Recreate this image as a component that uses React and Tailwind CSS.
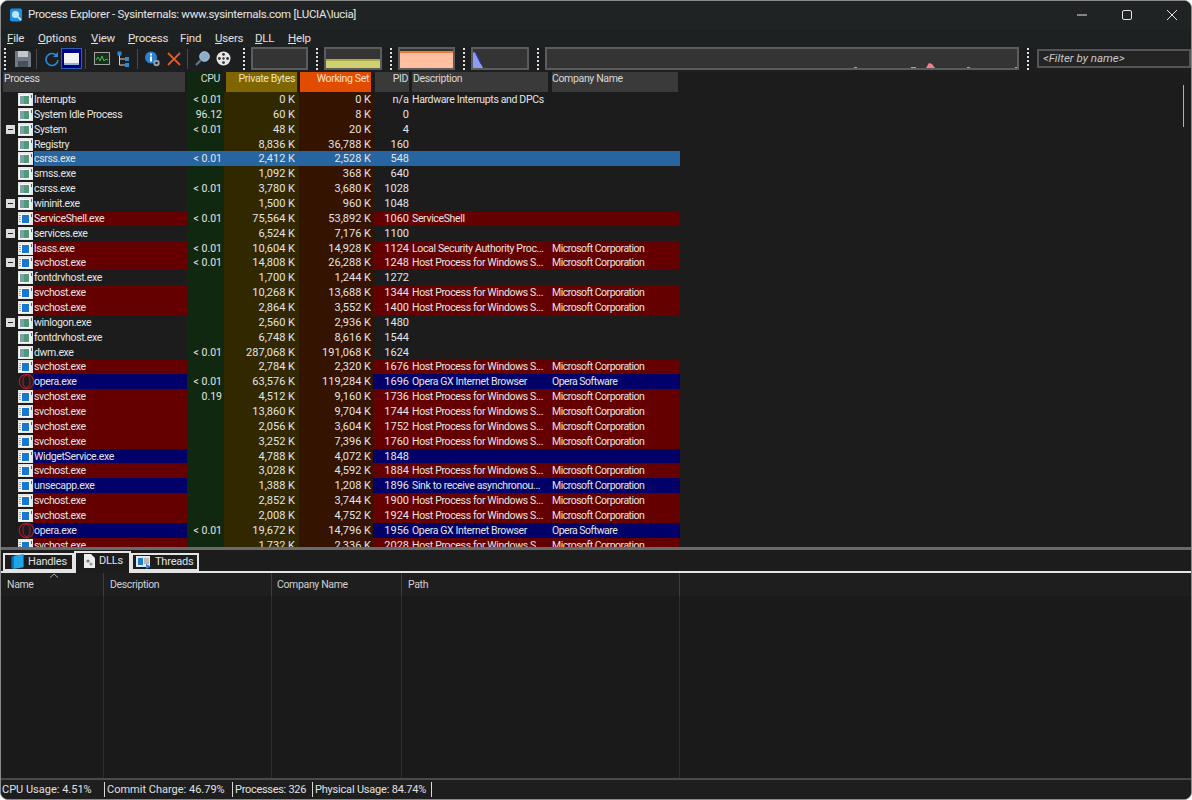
const ROWS = [
  ['Interrupts', 'sys', 0, '< 0.01', '0 K', '0 K', 'n/a', 'Hardware Interrupts and DPCs', '', ''],
  ['System Idle Process', 'sys', 0, '96.12', '60 K', '8 K', '0', '', '', ''],
  ['System', 'sys', 1, '< 0.01', '48 K', '20 K', '4', '', '', ''],
  ['Registry', 'sys', 0, '', '8,836 K', '36,788 K', '160', '', '', ''],
  ['csrss.exe', 'sys', 0, '< 0.01', '2,412 K', '2,528 K', '548', '', '', 'sel'],
  ['smss.exe', 'sys', 0, '', '1,092 K', '368 K', '640', '', '', ''],
  ['csrss.exe', 'sys', 0, '< 0.01', '3,780 K', '3,680 K', '1028', '', '', ''],
  ['wininit.exe', 'sys', 1, '', '1,500 K', '960 K', '1048', '', '', ''],
  ['ServiceShell.exe', 'svc', 0, '< 0.01', '75,564 K', '53,892 K', '1060', 'ServiceShell', '', 'red'],
  ['services.exe', 'sys', 1, '', '6,524 K', '7,176 K', '1100', '', '', ''],
  ['lsass.exe', 'svc', 0, '< 0.01', '10,604 K', '14,928 K', '1124', 'Local Security Authority Proc...', 'Microsoft Corporation', 'red'],
  ['svchost.exe', 'svc', 1, '< 0.01', '14,808 K', '26,288 K', '1248', 'Host Process for Windows S...', 'Microsoft Corporation', 'red'],
  ['fontdrvhost.exe', 'sys', 0, '', '1,700 K', '1,244 K', '1272', '', '', ''],
  ['svchost.exe', 'svc', 0, '', '10,268 K', '13,688 K', '1344', 'Host Process for Windows S...', 'Microsoft Corporation', 'red'],
  ['svchost.exe', 'svc', 0, '', '2,864 K', '3,552 K', '1400', 'Host Process for Windows S...', 'Microsoft Corporation', 'red'],
  ['winlogon.exe', 'sys', 1, '', '2,560 K', '2,936 K', '1480', '', '', ''],
  ['fontdrvhost.exe', 'sys', 0, '', '6,748 K', '8,616 K', '1544', '', '', ''],
  ['dwm.exe', 'sys', 0, '< 0.01', '287,068 K', '191,068 K', '1624', '', '', ''],
  ['svchost.exe', 'svc', 0, '', '2,784 K', '2,320 K', '1676', 'Host Process for Windows S...', 'Microsoft Corporation', 'red'],
  ['opera.exe', 'opera', 0, '< 0.01', '63,576 K', '119,284 K', '1696', 'Opera GX Internet Browser', 'Opera Software', 'navy'],
  ['svchost.exe', 'svc', 0, '0.19', '4,512 K', '9,160 K', '1736', 'Host Process for Windows S...', 'Microsoft Corporation', 'red'],
  ['svchost.exe', 'svc', 0, '', '13,860 K', '9,704 K', '1744', 'Host Process for Windows S...', 'Microsoft Corporation', 'red'],
  ['svchost.exe', 'svc', 0, '', '2,056 K', '3,604 K', '1752', 'Host Process for Windows S...', 'Microsoft Corporation', 'red'],
  ['svchost.exe', 'svc', 0, '', '3,252 K', '7,396 K', '1760', 'Host Process for Windows S...', 'Microsoft Corporation', 'red'],
  ['WidgetService.exe', 'svc', 0, '', '4,788 K', '4,072 K', '1848', '', '', 'navy'],
  ['svchost.exe', 'svc', 0, '', '3,028 K', '4,592 K', '1884', 'Host Process for Windows S...', 'Microsoft Corporation', 'red'],
  ['unsecapp.exe', 'svc', 0, '', '1,388 K', '1,208 K', '1896', 'Sink to receive asynchronou...', 'Microsoft Corporation', 'navy'],
  ['svchost.exe', 'svc', 0, '', '2,852 K', '3,744 K', '1900', 'Host Process for Windows S...', 'Microsoft Corporation', 'red'],
  ['svchost.exe', 'svc', 0, '', '2,008 K', '4,752 K', '1924', 'Host Process for Windows S...', 'Microsoft Corporation', 'red'],
  ['opera.exe', 'opera', 0, '< 0.01', '19,672 K', '14,796 K', '1956', 'Opera GX Internet Browser', 'Opera Software', 'navy'],
  ['svchost.exe', 'svc', 0, '', '1,732 K', '2,336 K', '2028', 'Host Process for Windows S...', 'Microsoft Corporation', 'red'],
]

const MENU = [
  ['File', 0, 'w-[31px]'],
  ['Options', 0, 'w-[53px]'],
  ['View', 0, 'w-[37px]'],
  ['Process', 0, 'w-[52px]'],
  ['Find', 1, 'w-[35px]'],
  ['Users', 0, 'w-[40px]'],
  ['DLL', 0, 'w-[33px]'],
  ['Help', 0, 'w-[30px]'],
]

// the reference text is narrow, so labels get pulled in a bit
const LABEL = 'text-[10.5px] tracking-[-0.35px]'

function ProcIcon({ kind }) {
  if (kind === 'opera') {
    return (
      <svg width="17" height="17" viewBox="0 0 17 17" className="-mr-[2px] shrink-0">
        <circle cx="8.5" cy="8.5" r="7.2" fill="none" stroke="#b01830" strokeWidth="1.2" />
        <ellipse cx="8.5" cy="8.5" rx="3.6" ry="6" fill="none" stroke="#b01830" strokeWidth="1.1" />
      </svg>
    )
  }
  return (
    <svg width="15" height="13" viewBox="0 0 15 13" className="shrink-0">
      <rect x="0" y="0" width="15" height="13" fill="#e6e6e6" />
      <rect x="1" y="2" width="11.5" height="10" fill="#fafafa" />
      {kind === 'svc' ? (
        <>
          <rect x="4" y="3" width="7" height="8" fill="#1878d0" />
          <path d="M2 3v8" stroke="#30506a" strokeDasharray="1 1" />
        </>
      ) : (
        <>
          <rect x="2" y="3" width="4" height="8" fill="#7f9fa8" />
          <rect x="6" y="3" width="5" height="8" fill="#4f9a78" />
        </>
      )}
      <rect x="13" y="2" width="1" height="3" fill="#5c5c5c" />
    </svg>
  )
}

function ProcessRow({ row }) {
  const [name, icon, tree, cpu, priv, ws, pid, desc, company, tone] = row
  const band = tone === 'sel' ? 'bg-[#2665a0]' : tone === 'red' ? 'bg-[#640000]' : tone === 'navy' ? 'bg-[#000068]' : ''
  return (
    <div className="flex h-[14.87px] w-[679px] items-center whitespace-nowrap text-[11px] text-[#e4e4e4]">
      <div className="flex h-full w-[33px] shrink-0 items-center">
        <div className="flex w-[16.5px] shrink-0 justify-end pr-[3px]">
          {tree ? (
            <div className="flex h-[9px] w-[9px] items-center justify-center bg-[#dcdcdc]">
              <div className="h-px w-[5px] bg-[#222]" />
            </div>
          ) : null}
        </div>
        <ProcIcon kind={icon} />
      </div>
      <div className={`flex h-full w-[153px] shrink-0 items-center ${LABEL} ${band}`}>{name}</div>
      <div className={`flex h-full w-[37px] shrink-0 items-center justify-end pr-[2px] text-[10.5px] ${tone === 'sel' ? band : 'bg-[#10280f]'}`}>{cpu}</div>
      <div className={`flex h-full w-[75px] shrink-0 items-center justify-end pr-[4px] ${tone === 'sel' ? band : 'bg-[#312800]'}`}>{priv}</div>
      <div className={`flex h-full w-[74px] shrink-0 items-center justify-end pr-[2px] ${tone === 'sel' ? band : 'bg-[#341300]'}`}>{ws}</div>
      <div className={`flex h-full w-[36px] shrink-0 items-center justify-end ${band}`}>{pid}</div>
      <div className={`flex h-full w-[140px] shrink-0 items-center overflow-hidden pl-[3px] ${LABEL} ${band}`}>{desc}</div>
      <div className={`flex h-full w-[131px] shrink-0 items-center pl-[3px] text-[10.5px] tracking-[-0.5px] ${band}`}>{company}</div>
    </div>
  )
}

function Grip() {
  return <div className="ml-[8px] mr-[6px] h-[22px] w-0 shrink-0 border-l-2 border-dotted border-[#e0e0e0]" />
}

function Sep() {
  return <div className="h-[20px] w-px shrink-0 bg-[#4a4a4a]" />
}

function Graph({ width, children }) {
  return (
    <div className="relative h-[23px] shrink-0 overflow-hidden border-2 border-[#5c5c5c] bg-[#343434]" style={{ width }}>
      {children}
    </div>
  )
}

function ToolIcons() {
  return (
    <div className="flex w-[223px] shrink-0 items-center">
      <svg width="16" height="16" viewBox="0 0 16 16" className="ml-[3px] shrink-0">
        <path d="M0 0h14l2 2v14H0z" fill="#6f7a84" />
        <rect x="3" y="0" width="10" height="6" fill="#c4c8cc" />
        <rect x="3" y="10" width="10" height="6" fill="#4a5056" />
      </svg>
      <div className="ml-[5px]"><Sep /></div>
      <svg width="14" height="16" viewBox="0 0 14 16" className="ml-[8px] shrink-0">
        <path d="M11.5 4.5A6 6 0 1 0 13 9" fill="none" stroke="#2a8ad8" strokeWidth="1.6" />
        <path d="M13 1v5H8z" fill="#2a8ad8" />
      </svg>
      <div className="ml-[2px] flex h-[21px] w-[21px] shrink-0 items-center justify-center border border-[#2a62b8] bg-[#000080]">
        <div className="h-[12px] w-[15px] border-b-2 border-[#8fb4e0] bg-[#f2f2f2]" />
      </div>
      <div className="ml-[3px]"><Sep /></div>
      <svg width="16" height="13" viewBox="0 0 16 13" className="ml-[8px] shrink-0">
        <rect x="0.5" y="0.5" width="15" height="12" fill="#1c2c20" stroke="#a0a4a0" />
        <path d="M2 8l2-3 2 4 2-5 2 5 2-2 2 1" fill="none" stroke="#40c048" strokeWidth="1" />
      </svg>
      <svg width="12" height="16" viewBox="0 0 12 16" className="ml-[7px] shrink-0">
        <path d="M2.5 3v11h6M2.5 8h6" fill="none" stroke="#d0d0d0" />
        <rect x="0.5" y="0.5" width="4" height="4" fill="#2a8ad8" />
        <rect x="8" y="6" width="4" height="4" fill="#2a8ad8" />
        <rect x="8" y="12" width="4" height="4" fill="#2a8ad8" />
      </svg>
      <div className="ml-[8px]"><Sep /></div>
      <svg width="15" height="16" viewBox="0 0 15 16" className="ml-[7px] shrink-0">
        <circle cx="6" cy="6.5" r="6" fill="#2a80d4" />
        <rect x="5" y="5.5" width="2" height="5" fill="#fff" />
        <rect x="5" y="2.5" width="2" height="2" fill="#fff" />
        <circle cx="11.5" cy="12" r="2.2" fill="none" stroke="#96a0a8" strokeWidth="2" />
      </svg>
      <svg width="14" height="14" viewBox="0 0 14 14" className="ml-[7px] shrink-0">
        <path d="M1 1l12 12M13 1L1 13" stroke="#e05a28" strokeWidth="1.8" />
      </svg>
      <div className="ml-[6px]"><Sep /></div>
      <svg width="15" height="15" viewBox="0 0 15 15" className="ml-[7px] shrink-0">
        <circle cx="9.5" cy="5.5" r="4.8" fill="#88aed0" stroke="#b8c4d0" />
        <path d="M6 9L1 14" stroke="#607488" strokeWidth="2.4" />
      </svg>
      <svg width="15" height="15" viewBox="0 0 15 15" className="ml-[6px] shrink-0">
        <circle cx="7.5" cy="7.5" r="7" fill="#e6e6e6" />
        <circle cx="7.5" cy="3.4" r="1.4" fill="#333" />
        <circle cx="7.5" cy="11.6" r="1.4" fill="#333" />
        <circle cx="3.4" cy="7.5" r="1.4" fill="#333" />
        <circle cx="11.6" cy="7.5" r="1.4" fill="#333" />
        <circle cx="7.5" cy="7.5" r="1.2" fill="#333" />
      </svg>
    </div>
  )
}

function Header() {
  return (
    <div className={`flex h-[20px] shrink-0 whitespace-nowrap leading-[14px] text-[#d8d8d8] ${LABEL}`}>
      <div className="ml-[2px] w-[182px] bg-[#3a3a3a] pl-[1px]">Process</div>
      <div className="ml-[2px] w-[35px] bg-[#10280f] pr-[2px] text-right">CPU</div>
      <div className="ml-[4px] w-[71px] bg-[#7f6600] pr-[2px] text-right text-[#f0e4b8]">Private Bytes</div>
      <div className="ml-[3px] w-[71px] bg-[#e24c00] pr-[2px] text-right text-[#ffe0cc]">Working Set</div>
      <div className="ml-[4px] w-[34px] bg-[#3a3a3a] pr-[1px] text-right">PID</div>
      <div className="ml-[3px] w-[136px] bg-[#3a3a3a] pl-[1px]">Description</div>
      <div className="ml-[4px] w-[126px] bg-[#3a3a3a]">Company Name</div>
    </div>
  )
}

function Tab({ label, active, icon, width }) {
  return (
    <div
      className={`flex items-center border-2 border-[#e4e4e4] ${active ? 'relative -mb-[2px] h-[22px] border-b-0 bg-[#1c1c1c] pb-[5px]' : 'h-[18px] pb-[1px]'}`}
      style={{ width }}
    >
      {icon}
      <span>{label}</span>
    </div>
  )
}

export default function App() {
  return (
    <div className="flex h-[800px] w-[1192px] flex-col overflow-hidden rounded-lg border border-[#8a8a8a] bg-[#1c1c1c] font-['Roboto',sans-serif] text-[11px] leading-[15px] text-[#e0e0e0]">
      {/* title bar */}
      <div className="flex h-[29px] shrink-0 items-center bg-[#1f2324] pb-[2px] pl-[8px] text-[11.5px] tracking-[-0.3px]">
        <svg width="14" height="14" viewBox="0 0 14 14">
          <rect x="1" y="0.5" width="12" height="13" rx="2" fill="#1d8fe0" />
          <circle cx="6.5" cy="6.5" r="3.6" fill="#bfe6fa" />
          <path d="M9 9l3 3" stroke="#e8f6ff" strokeWidth="1.6" />
        </svg>
        <span className="ml-[5px] text-[#e6e6e6]">Process Explorer - Sysinternals: www.sysinternals.com [LUCIA\lucia]</span>
        <div className="ml-auto flex items-center text-[#e4e4e4]">
          <svg width="12" height="12" viewBox="0 0 12 12" className="mr-[33px]"><path d="M1 6h10" stroke="currentColor" /></svg>
          <svg width="12" height="12" viewBox="0 0 12 12" className="mr-[33px]"><rect x="1.5" y="1.5" width="9" height="9" rx="1.5" fill="none" stroke="currentColor" /></svg>
          <svg width="12" height="12" viewBox="0 0 12 12" className="mr-[13px]"><path d="M1 1l10 10M11 1L1 11" stroke="currentColor" /></svg>
        </div>
      </div>

      {/* menu */}
      <div className="flex h-[17px] shrink-0 items-center bg-[#1e2122] pl-[6px] text-[11.5px] tracking-[-0.2px] text-[#e0e0e0]">
        {MENU.map(([m, k, w]) => (
          <span key={m} className={`shrink-0 ${w}`}>
            {m.slice(0, k)}
            <span className="underline">{m[k]}</span>
            {m.slice(k + 1)}
          </span>
        ))}
      </div>

      {/* toolbar */}
      <div className="flex h-[25px] shrink-0 items-center bg-[#1c1e1f] pb-[2px]">
        <div className="-ml-[5px]"><Grip /></div>
        <ToolIcons />
        <Grip />
        <Graph width={57} />
        <Grip />
        <Graph width={58}>
          <div className="absolute inset-x-0 bottom-0 h-[9px] border-t-2 border-[#a8a848] bg-[#d0d070]" />
        </Graph>
        <Grip />
        <Graph width={57}>
          <div className="absolute inset-x-0 bottom-0 h-[17px] border-t-2 border-[#f07830] bg-[#ffbfa0]" />
        </Graph>
        <Grip />
        <Graph width={58}>
          <svg width="14" height="19" viewBox="0 0 14 19" className="absolute bottom-0 left-0">
            <path d="M0 19V3h2l3 6 3 6 2 4z" fill="#8c9cf0" />
            <path d="M0 3h2l3 6 3 6" fill="none" stroke="#2838c8" />
          </svg>
        </Graph>
        <Grip />
        <Graph width={474}>
          <svg width="470" height="19" viewBox="0 0 470 19" className="absolute bottom-0 left-0">
            <path d="M307 19v-1h3v1zM364 19v-1h5v1zM379 19l3-5 3 1 3 4zM420 19v-1h3v1zM468 19v-1h3v1z" fill="#f08090" />
          </svg>
        </Graph>
        <Grip />
        <div className="ml-[2px] flex h-[19px] flex-1 items-center border-2 border-[#555] bg-[#242424] pl-[4px] text-[11.5px] italic text-[#c8c8c8]">&lt;Filter by name&gt;</div>
      </div>

      {/* process list */}
      <div className="relative flex h-[475px] shrink-0 flex-col overflow-hidden bg-[#1c1c1c]">
        <Header />
        <div className="flex-1">
          {ROWS.map((r, i) => (
            <ProcessRow key={i} row={r} />
          ))}
        </div>
        <div className="absolute right-[7px] top-[13px] h-[42px] w-px bg-[#b0b0b0]" />
      </div>

      {/* splitter */}
      <div className="h-[3px] shrink-0 bg-[#6a6a6a]" />

      {/* tabs */}
      <div className="flex h-[23px] shrink-0 items-end border-b-2 border-[#e4e4e4] pl-[2px] text-[11px] tracking-[-0.2px]">
        <Tab
          label="Handles"
          width={71}
          icon={
            <svg width="13" height="15" viewBox="0 0 13 16" className="ml-[6px] mr-[4px] shrink-0">
              <path d="M2 2l11-2v14L2 16z" fill="#20a4e8" />
              <path d="M0 3l2-1v14l-2-1z" fill="#0c70c0" />
            </svg>
          }
        />
        <Tab
          label="DLLs"
          width={57}
          active
          icon={
            <svg width="11" height="14" viewBox="0 0 11 14" className="ml-[8px] mr-[4px] shrink-0">
              <path d="M0 0h7l4 4v10H0z" fill="#ececec" />
              <circle cx="4" cy="7" r="1.6" fill="#777" />
              <circle cx="7" cy="10" r="1.6" fill="#999" />
            </svg>
          }
        />
        <Tab
          label="Threads"
          width={68}
          icon={
            <svg width="16" height="14" viewBox="0 0 16 14" className="ml-[3px] mr-[3px] shrink-0">
              <rect x="0" y="1" width="14" height="11" fill="#e8e8e8" />
              <rect x="2" y="3" width="5" height="7" fill="#1c7cd0" />
              <path d="M8 4h5M8 6h5M8 8h5" stroke="#888" />
              <path d="M10 9l5 2.5-5 2.5z" fill="#2a8ad8" />
            </svg>
          }
        />
      </div>

      {/* dll list */}
      <div className="relative flex min-h-0 flex-1 flex-col bg-[#1a1a1a]">
        <div className={`flex h-[23px] shrink-0 items-center bg-[#1e1e1e] text-[#d0d0d0] ${LABEL}`}>
          <div className="flex h-full w-[102px] items-center pl-[6px]">Name</div>
          <div className="flex h-full w-[168px] items-center border-l border-[#3c3c3c] pl-[6px]">Description</div>
          <div className="flex h-full w-[130px] items-center border-l border-[#3c3c3c] pl-[5px]">Company Name</div>
          <div className="flex h-full w-[279px] items-center border-x border-[#3c3c3c] pl-[6px]">Path</div>
        </div>
        <div className="flex flex-1">
          <div className="w-[102px]" />
          <div className="w-[168px] border-l border-[#2e2e2e]" />
          <div className="w-[130px] border-l border-[#2e2e2e]" />
          <div className="w-[279px] border-x border-[#2e2e2e]" />
        </div>
        <svg width="10" height="5" viewBox="0 0 10 5" className="absolute left-[48px] top-[0px]">
          <path d="M1 4.5L5 1l4 3.5" fill="none" stroke="#a8a8a8" />
        </svg>
      </div>

      {/* status bar */}
      <div className="flex h-[21px] shrink-0 items-center whitespace-nowrap border-t-2 border-[#4a4a4a] bg-[#1e1e1e] pl-[1px] text-[#e0e0e0]">
        <div className="w-[102px] shrink-0">CPU Usage: 4.51%</div>
        <div className="w-[128px] shrink-0 border-l border-[#d8d8d8] pl-[2px]">Commit Charge: 46.79%</div>
        <div className="w-[80px] shrink-0 border-l border-[#d8d8d8] pl-[2px] tracking-[-0.3px]">Processes: 326</div>
        <div className="w-[120px] shrink-0 border-x border-[#d8d8d8] pl-[2px] tracking-[-0.2px]">Physical Usage: 84.74%</div>
      </div>
    </div>
  )
}
